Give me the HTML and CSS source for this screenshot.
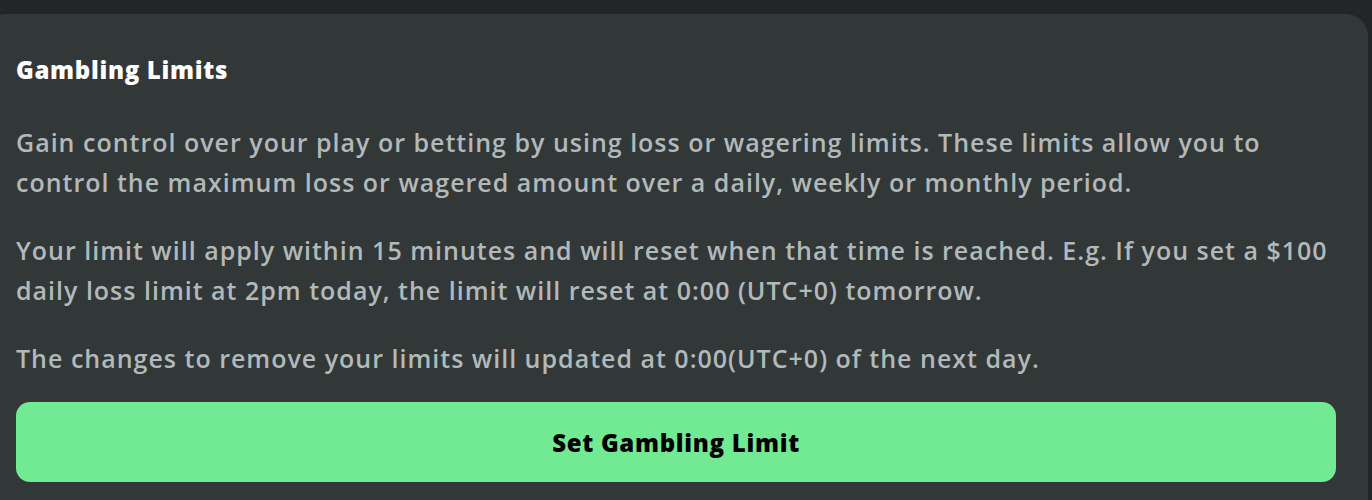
FILE: index.html
```html
<!DOCTYPE html>
<html lang="en">
<head>
<meta charset="utf-8">
<title>Gambling Limits</title>
<link rel="stylesheet" href="styles.css">
</head>
<body>
<section class="card">
  <h2 class="title">Gambling Limits</h2>
  <p class="text">Gain control over your play or betting by using loss or wagering limits. These limits allow you to control the maximum loss or wagered amount over a daily, weekly or monthly period.</p>
  <p class="text">Your limit will apply within 15 minutes and will reset when that time is reached. E.g. If you set a $100 daily loss limit at 2pm today, the limit will reset at 0:00 (UTC+0) tomorrow.</p>
  <p class="text">The changes to remove your limits will updated at 0:00(UTC+0) of the next day.</p>
  <button class="btn" type="button">Set Gambling Limit</button>
</section>
</body>
</html>
```

FILE: styles.css
```css
* { box-sizing: border-box; }
html, body { height: 100%; }
body {
  margin: 0;
  background: #232626;
  font-family: "Open Sans", "Noto Sans", sans-serif;
  overflow: hidden;
}
.card {
  margin: 14px 4px 0 -16px;
  padding: 40px 32px 40px 32px;
  background: #323738;
  border-radius: 22px;
  min-height: 520px;
  display: flex;
  flex-direction: column;
}
.title {
  margin: 0 0 36px;
  font-size: 24px;
  line-height: 32px;
  font-weight: 800;
  letter-spacing: 0.7px;
  color: #ffffff;
}
.text {
  margin: 0 0 28px;
  font-size: 25px;
  line-height: 40px;
  font-weight: 600;
  letter-spacing: 1px;
  color: #b1b9ba;
}
.text:last-of-type { margin-bottom: 24px; }
.btn {
  height: 80px;
  border: 0;
  border-radius: 14px;
  background: #72ea93;
  color: #000;
  font-family: inherit;
  font-size: 24px;
  font-weight: 800;
  letter-spacing: 0.7px;
  cursor: pointer;
}
```
